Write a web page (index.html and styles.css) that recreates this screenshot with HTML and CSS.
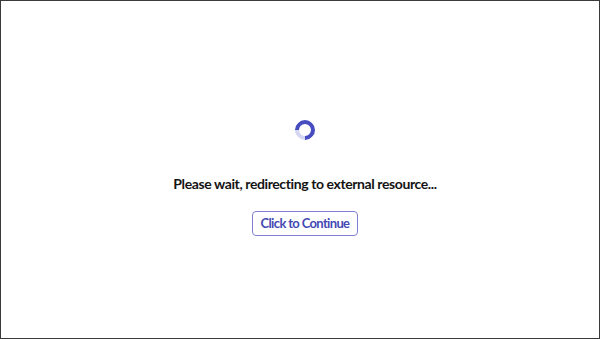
FILE: index.html
```html
<!DOCTYPE html>
<html>
<head>
    <meta charset="UTF-8" />
    <title>Redirecting</title>
    <link rel="stylesheet" href="styles.css">
</head>
<body>
    <div class="page">
        <div class="spinner"></div>
        <p class="msg">Please wait, redirecting to external resource...</p>
        <a href="javascript:;" class="btn">Click to Continue</a>
    </div>
</body>
</html>
```

FILE: styles.css
```css
*{
    margin: 0;
    padding: 0;
    box-sizing: border-box;
}
html,body{
    height: 100%;
}
body{
    font-family: Lato, "Liberation Sans", sans-serif;
    background: #fff;
}
.page{
    height: 339px;
    border: 1px solid #3a3a3a;
    display: flex;
    flex-direction: column;
    align-items: center;
    padding-top: 119px;
    padding-left: 10px;
}
.spinner{
    width: 20px;
    height: 20px;
    border-radius: 50%;
    border: 4px solid #474cc0;
    border-left-color: #d5d6f1;
    transform: rotate(-45deg);
}
.msg{
    margin-top: 35px;
    font-size: 14px;
    line-height: 18px;
    letter-spacing: -0.4px;
    font-weight: 700;
    color: #141414;
}
.btn{
    margin-top: 18px;
    display: inline-block;
    width: 106px;
    height: 25px;
    text-align: center;
    font-size: 13px;
    letter-spacing: -0.65px;
    font-weight: 700;
    color: #4549b4;
    text-decoration: none;
    border: 1px solid #7f82d2;
    border-radius: 4px;
    line-height: 23px;
}
```
